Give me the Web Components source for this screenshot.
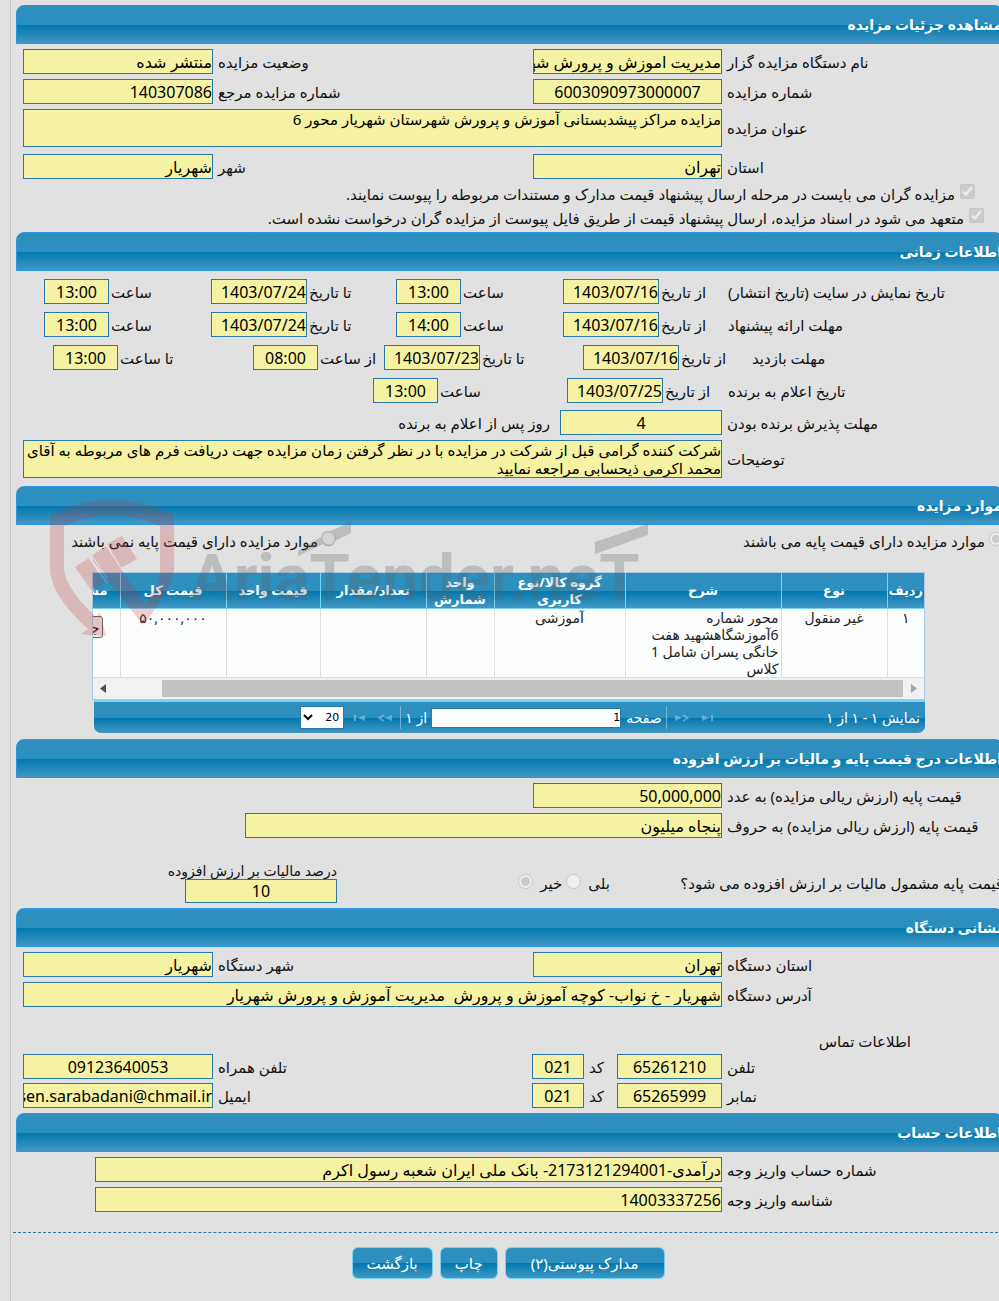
<!DOCTYPE html>
<html lang="fa" dir="rtl">
<head>
<meta charset="utf-8">
<meta name="viewport" content="width=device-width, initial-scale=1">
<title>مشاهده جزئیات مزایده</title>
<style>
  body {
    margin: 0;
    background: #e1e1e1;
    color: #111;
    font: 15px/18px "Noto Sans", "DejaVu Sans", sans-serif;
    overflow-x: hidden;
    --line: #2779aa;
    --field: #f5f3a3;
    --bar: linear-gradient(#2f90bf 0%, #2d8fbe 50%, #0078ae 51%, #4297c2 100%);
  }
</style>
</head>
<body>

<auction-page>
  <panel-box title-text="مشاهده جزئیات مزایده">
    <form-row>
      <text-field label="نام دستگاه مزایده گزار" value="مدیریت اموزش و پرورش شهر"></text-field>
      <text-field label="وضعیت مزایده" value="منتشر شده"></text-field>
      <text-field label="شماره مزایده" value="6003090973000007" center></text-field>
      <text-field label="شماره مزایده مرجع" value="140307086"></text-field>
      <text-field label="عنوان مزایده" value="مزایده مراکز پیشدبستانی آموزش و پرورش شهرستان شهریار محور 6" multi></text-field>
    </form-row>
    <form-row style="--top: 7px">
      <text-field label="استان" value="تهران"></text-field>
      <text-field label="شهر" value="شهریار"></text-field>
    </form-row>
    <check-line style="--indent: 28px">مزایده گران می بایست در مرحله ارسال پیشنهاد قیمت مدارک و مستندات مربوطه را پیوست نمایند.</check-line>
    <check-line style="--indent: 19px">متعهد می شود در اسناد مزایده، ارسال پیشنهاد قیمت از طریق فایل پیوست از مزایده گران درخواست نشده است.</check-line>
  </panel-box>

  <panel-box title-text="اطلاعات زمانی" style="--foot: 8px">
    <time-line label="تاریخ نمایش در سایت (تاریخ انتشار)" style="--top: 3px">
      <time-slot label="از تاریخ" value="1403/07/16" date></time-slot>
      <time-slot label="ساعت" value="13:00"></time-slot>
      <time-slot label="تا تاریخ" value="1403/07/24" date></time-slot>
      <time-slot label="ساعت" value="13:00"></time-slot>
    </time-line>
    <time-line label="مهلت ارائه پیشنهاد">
      <time-slot label="از تاریخ" value="1403/07/16" date></time-slot>
      <time-slot label="ساعت" value="14:00"></time-slot>
      <time-slot label="تا تاریخ" value="1403/07/24" date></time-slot>
      <time-slot label="ساعت" value="13:00"></time-slot>
    </time-line>
    <time-line label="مهلت بازدید" style="--cols: 251fr 169fr 199fr 131fr 200fr 30fr">
      <time-slot label="از تاریخ" value="1403/07/16" date></time-slot>
      <time-slot label="تا تاریخ" value="1403/07/23" date></time-slot>
      <time-slot label="از ساعت" value="08:00"></time-slot>
      <time-slot label="تا ساعت" value="13:00"></time-slot>
    </time-line>
    <time-line label="تاریخ اعلام به برنده" style="--cols: 275fr 161fr 194fr 350fr">
      <time-slot label="از تاریخ" value="1403/07/25" date></time-slot>
      <time-slot label="ساعت" value="13:00"></time-slot>
    </time-line>
    <form-row style="--top: 7px; --cols: 276fr 162fr 532fr">
      <text-field label="مهلت پذیرش برنده بودن" value="4" center></text-field>
      <side-note>روز پس از اعلام به برنده</side-note>
    </form-row>
    <form-row style="--top: 5px">
      <text-field label="توضیحات" value="شرکت کننده گرامی قبل از شرکت در مزایده با در نظر گرفتن زمان مزایده جهت دریافت فرم های مربوطه به آقای محمد اکرمی ذیحسابی مراجعه نمایید" multi></text-field>
    </form-row>
  </panel-box>

  <panel-box title-text="موارد مزایده">
    <water-mark></water-mark>
    <radio-pair></radio-pair>
    <items-grid></items-grid>
  </panel-box>

  <panel-box title-text="اطلاعات درج قیمت پایه و مالیات بر ارزش افزوده">
    <form-row>
      <text-field label="قیمت پایه (ارزش ریالی مزایده) به عدد" value="50,000,000"></text-field>
    </form-row>
    <form-row style="--top: 5px; --cols: 276fr 477fr 217fr">
      <text-field label="قیمت پایه (ارزش ریالی مزایده) به حروف" value="پنجاه میلیون"></text-field>
    </form-row>
    <vat-line></vat-line>
  </panel-box>

  <panel-box title-text="نشانی دستگاه">
    <form-row>
      <text-field label="استان دستگاه" value="تهران"></text-field>
      <text-field label="شهر دستگاه" value="شهریار"></text-field>
      <text-field label="آدرس دستگاه" value="شهریار - خ نواب- کوچه آموزش و پرورش  مدیریت آموزش و پرورش شهریار" wide></text-field>
    </form-row>
    <sub-title>اطلاعات تماس</sub-title>
    <form-row style="--top: 4px; --row-gap: 4px; --cols: 276fr 105fr 23fr 52fr 309fr 190fr">
      <text-field label="تلفن" value="65261210" center></text-field>
      <text-field label="کد" value="021" center></text-field>
      <text-field label="تلفن همراه" value="09123640053" center></text-field>
      <text-field label="نمابر" value="65265999" center></text-field>
      <text-field label="کد" value="021" center></text-field>
      <text-field label="ایمیل" value="hosen.sarabadani@chmail.ir"></text-field>
    </form-row>
  </panel-box>

  <panel-box title-text="اطلاعات حساب">
    <form-row style="--cols: 276fr 627fr 67fr">
      <text-field label="شماره حساب واریز وجه" value="درآمدی-2173121294001- بانک ملی ایران شعبه رسول اکرم"></text-field>
      <span></span>
      <text-field label="شناسه واریز وجه" value="14003337256"></text-field>
    </form-row>
  </panel-box>

  <action-bar></action-bar>
</auction-page>

<script>
  const fieldCss = `
    * { box-sizing: border-box; }
    input, textarea {
      display: block;
      width: 100%;
      min-width: 0;
      height: 25px;
      margin: 0;
      padding: 0;
      border: 1px solid var(--line);
      border-radius: 0;
      outline: 0;
      background: var(--field);
      color: #000;
      font: 16px/20px "Noto Sans", "DejaVu Sans", sans-serif;
      text-align: start;
    }
    .center { text-align: center; }
    label { white-space: nowrap; }
  `;

  // registers a custom element whose shadow root is filled from render(host)
  function define(name, render) {
    customElements.define(name, class extends HTMLElement {
      constructor() {
        super();
        this.attachShadow({ mode: 'open' });
      }
      connectedCallback() {
        const template = document.createElement('template');
        template.innerHTML = render(this);
        this.shadowRoot.replaceChildren(template.content.cloneNode(true));
      }
    });
  }

  define('auction-page', () => `
    <style>
      :host {
        display: block;
        box-sizing: border-box;
        min-height: 100vh;
        margin-inline: -4px 10px;
        padding-inline-end: 5px;
        padding-top: 5px;
        border-inline-end: 1px solid #c6c6c6;
      }
    </style>
    <slot></slot>
  `);

  define('panel-box', (el) => `
    <style>
      :host { display: block; position: relative; }
      h2 {
        box-sizing: border-box;
        height: 39px;
        margin: 0;
        border: 1px solid #2b95e5;
        border-radius: 8px 8px 0 0;
        background: var(--bar);
        color: #fff;
        font-size: 14px;
        font-weight: 700;
        line-height: 37px;
      }
      .body { padding: 5px 0 var(--foot, 5px) 7px; }
    </style>
    <h2>${el.getAttribute('title-text')}</h2>
    <div class="body"><slot></slot></div>
  `);

  define('form-row', () => `
    <style>
      :host {
        display: grid;
        grid-template-columns: var(--cols, 276fr 189fr 310fr 190fr);
        gap: var(--row-gap, 5px) 5px;
        align-items: center;
        margin-top: var(--top, 0);
      }
    </style>
    <slot></slot>
  `);

  define('text-field', (el) => {
    const value = el.getAttribute('value');
    const multi = el.hasAttribute('multi');
    const cls = el.hasAttribute('center') ? 'center' : '';
    return `
      <style>
        ${fieldCss}
        :host { display: contents; }
        label { text-align: end; min-width: 0; }
        textarea {
          grid-column: span 3;
          height: 38px;
          resize: none;
          overflow: hidden;
          font-size: 15px;
          line-height: 18px;
        }
        .wide { grid-column: span 3; }
      </style>
      <label for="f">${el.getAttribute('label')}</label>
      ${multi
        ? `<textarea id="f" readonly>${value}</textarea>`
        : `<input id="f" class="${cls} ${el.hasAttribute('wide') ? 'wide' : ''}" value="${value}" readonly>`}
    `;
  });

  define('side-note', () => `
    <style>:host { padding-inline-start: 5px; }</style>
    <slot></slot>
  `);

  define('sub-title', () => `
    <style>
      :host { display: block; margin: 25px 92px 0 0; }
    </style>
    <slot></slot>
  `);

  define('check-line', () => `
    <style>
      :host { display: block; padding-inline-start: var(--indent); height: 24px; padding-top: 5px; box-sizing: border-box; }
      label { display: flex; gap: 5px; white-space: nowrap; line-height: 20px; }
      input { width: 15px; height: 15px; margin: 0; }
    </style>
    <label><input type="checkbox" checked disabled><slot></slot></label>
  `);

  define('time-line', (el) => `
    <style>
      :host {
        display: grid;
        grid-template-columns: var(--cols, 275fr 165fr 167fr 185fr 167fr 21fr);
        align-items: center;
        margin-top: var(--top, 8px);
      }
      span { text-align: end; white-space: nowrap; }
    </style>
    <span>${el.getAttribute('label')}</span>
    <slot></slot>
  `);

  define('time-slot', (el) => {
    const date = el.hasAttribute('date');
    return `
      <style>
        ${fieldCss}
        :host { display: flex; justify-content: flex-end; align-items: center; gap: 2px; }
        input { width: ${date ? 96 : 65}px; flex: none; }
      </style>
      <label for="t">${el.getAttribute('label')}</label>
      <input id="t" class="${date ? '' : 'center'}" value="${el.getAttribute('value')}" readonly>
    `;
  });

  define('radio-pair', () => `
    <style>
      :host { display: grid; grid-template-columns: 667fr 313fr; }
      label { display: flex; gap: 4px; white-space: nowrap; padding-top: 2px; }
      input { width: 14px; height: 14px; margin: 0; }
    </style>
    <label><input type="radio" name="base" checked disabled>موارد مزایده دارای قیمت پایه می باشند</label>
    <label><input type="radio" name="base" disabled>موارد مزایده دارای قیمت پایه نمی باشند</label>
  `);

  define('items-grid', () => `
    <style>
      :host { display: block; margin: 22px 78px 1px 69px; font-size: 14px; line-height: 17px; }
      .view { overflow: hidden; border: 1px solid #a6c9e2; background: #fcfdfd; }
      table { width: calc(100% + 60px); border-collapse: collapse; table-layout: fixed; }
      th {
        height: 35px;
        padding: 0;
        background: var(--bar);
        border-inline-end: 1px solid #77d5f7;
        border-bottom: 1px solid #77d5f7;
        color: #fff;
        font-size: 13px;
        font-weight: 700;
      }
      td {
        height: 68px;
        padding: 0 2px;
        border-inline-end: 1px solid #ddd;
        border-bottom: 1px solid #ddd;
        vertical-align: top;
        text-align: center;
        color: #222;
      }
      td.text { text-align: start; }
      td button {
        float: right;
        margin: 7px 15px 0 0;
        padding: 0 2px;
        height: 22px;
        border: 1px solid #666;
        border-radius: 3px;
        background: #efefef;
        font: inherit;
        color: #111;
      }
      .scroll { display: flex; align-items: center; height: 21px; background: #f1f1f1; }
      .scroll svg { flex: none; width: 21px; height: 9px; }
      .thumb { flex: 741; height: 17px; background: #c1c1c1; }
      .rest { flex: 48; }
      .pager {
        display: grid;
        grid-template-columns: 1fr auto 1fr;
        align-items: center;
        height: 33px;
        box-sizing: border-box;
        margin-left: 2px;
        padding: 0 5px;
        border-top: 2px solid #77d5f7;
        border-radius: 0 0 7px 7px;
        background: var(--bar);
        color: #fff;
      }
      nav { display: flex; align-items: center; gap: 4px; }
      nav svg { width: 14px; height: 10px; margin: 0 4px; opacity: .4; }
      nav i { width: 1px; height: 23px; background: #6fb6d8; }
      nav input, nav select {
        box-sizing: border-box;
        margin: 0;
        border: 1px solid var(--line);
        background: #fff;
        color: #000;
        font: 11px "DejaVu Sans", sans-serif;
      }
      nav input { width: 190px; height: 20px; padding: 0; }
      nav label { display: flex; align-items: center; gap: 5px; }
      nav select { width: 44px; height: 23px; }
    </style>
    <div class="view">
      <table>
        <colgroup>
          <col style="width: 37px"><col style="width: 106px"><col style="width: 156px"><col style="width: 131px"><col style="width: 68px"><col style="width: 106px"><col style="width: 94px"><col style="width: 106px"><col>
        </colgroup>
        <thead>
          <tr><th>ردیف</th><th>نوع</th><th>شرح</th><th>گروه کالا/نوع کاربری</th><th>واحد شمارش</th><th>تعداد/مقدار</th><th>قیمت واحد</th><th>قیمت کل</th><th>مشخصات</th></tr>
        </thead>
        <tbody>
          <tr><td>۱</td><td>غیر منقول</td><td class="text">محور شماره 6آموزشگاهشهید هفت خانگی پسران شامل 1 کلاس</td><td>آموزشی</td><td></td><td></td><td></td><td>۵۰,۰۰۰,۰۰۰</td><td><button type="button">جزئیات</button></td></tr>
        </tbody>
      </table>
      <div class="scroll">
        <svg viewBox="0 0 21 9"><path d="M8 0l6 4.500-6 4.500z" fill="#a3a3a3"/></svg>
        <div class="thumb"></div>
        <div class="rest"></div>
        <svg viewBox="0 0 21 9"><path d="M13 0L7 4.500l6 4.500z" fill="#505050"/></svg>
      </div>
    </div>
    <div class="pager">
      <span>نمایش ۱ - ۱ از ۱</span>
      <nav>
        <svg viewBox="0 0 14 10"><path d="M1 2l7 3-7 3zM10 2h2v6h-2z" fill="#d8e7f3"/></svg>
        <svg viewBox="0 0 14 10"><path d="M0 2l7 3-7 3z" fill="#d8e7f3"/><path d="M8 2l5 3-5 3" fill="none" stroke="#d8e7f3" stroke-width="1.500"/></svg>
        <i></i>
        <label>صفحه <input type="text" value="1"></label>
        <span>از ۱</span>
        <i></i>
        <svg viewBox="0 0 14 10"><path d="M14 2L7 5l7 3z" fill="#d8e7f3"/><path d="M6 2L1 5l5 3" fill="none" stroke="#d8e7f3" stroke-width="1.500"/></svg>
        <svg viewBox="0 0 14 10"><path d="M13 2L6 5l7 3zM2 2h2v6H2z" fill="#d8e7f3"/></svg>
        <select aria-label="تعداد در صفحه"><option>20</option></select>
      </nav>
    </div>
  `);

  define('water-mark', () => `
    <style>
      :host { display: block; position: absolute; left: 34px; top: 13px; z-index: 2; pointer-events: none; }
      svg { display: block; }
      text { font: 700 65px Roboto, "Liberation Sans", sans-serif; }
    </style>
    <svg width="602" height="140" viewBox="50 499 602 140" direction="ltr">
      <g fill="#c2363a" opacity=".23">
        <path d="M50 515Q111 485 174 515V570Q171 590 143 625L92 560 108 551 145 604Q160 585 160 570V526Q112 504 64 526V570Q67 590 96 617L100 612 106 636 81 634 88 629Q50 595 50 568Z"/>
        <path d="M75 567L89 558 105 583 91 590Z"/>
        <path d="M91 556L106 546 121 568 107 577Z"/>
        <path d="M107 544L122 536 137 559 121 568Z"/>
        <path d="M89 558L107 583M91 554.500L107 578M106 545L121 568" stroke="#fff" stroke-width="1"/>
      </g>
      <g fill="#606060" opacity=".27">
        <text x="190" y="600">AriaTender.neT</text>
        <path d="M298 551L321 537a7 7 0 0 1 9-6L351 522v11l-16 8a7 7 0 0 1-12 3l-25 12z"/>
        <path d="M595 542L648 524v11l-53 19z"/>
      </g>
      <circle cx="328" cy="538" r="6" fill="#e1e1e1" fill-opacity=".5"/>
    </svg>
  `);

  define('vat-line', () => `
    <style>
      ${fieldCss}
      :host {
        display: grid;
        grid-template-columns: 393fr 273fr 314fr;
        margin-top: 24px;
      }
      .q, .opts { padding-top: 12px; white-space: nowrap; }
      .opts { display: flex; }
      .opts label { display: flex; gap: 7px; margin-inline-end: 4px; }
      .opts input { width: 15px; height: 15px; margin: 0; flex: none; }
      .pct { font-size: 14px; }
      .pct input { width: 152px; height: 24px; margin-top: -1px; }
    </style>
    <span class="q">قیمت پایه مشمول مالیات بر ارزش افزوده می شود؟</span>
    <div class="opts">
      <label>بلی<input type="radio" name="vat" disabled></label>
      <label>خیر<input type="radio" name="vat" checked disabled></label>
    </div>
    <div class="pct">
      <label for="p">درصد مالیات بر ارزش افزوده</label>
      <input id="p" class="center" value="10" readonly>
    </div>
  `);

  define('action-bar', () => `
    <style>
      :host {
        display: flex;
        justify-content: center;
        gap: 7px;
        margin: 15px 0 0 -3px;
        padding: 14px 0 22px;
        border-top: 1px dashed var(--line);
      }
      button {
        height: 32px;
        padding: 0 14px;
        border: 1px solid #77d5f7;
        border-radius: 6px;
        background: var(--bar);
        color: #fff;
        font: inherit;
      }
      .docs { padding: 0 25px; }
    </style>
    <button type="button" class="docs">مدارک پیوستی(۲)</button>
    <button type="button">چاپ</button>
    <button type="button">بازگشت</button>
  `);
</script>
</body>
</html>
